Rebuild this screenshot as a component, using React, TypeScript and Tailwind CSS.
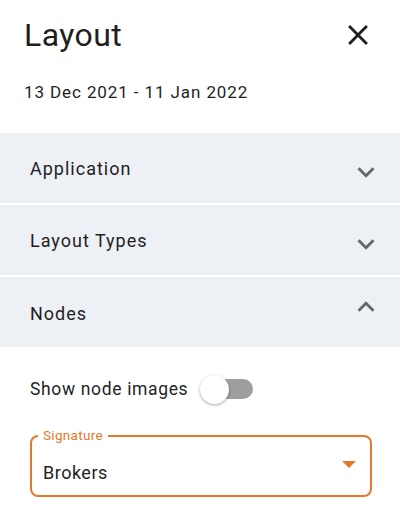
import React from "react";

export default function App() {
  const rows = [
    { label: "Application", open: false },
    { label: "Layout Types", open: false },
    { label: "Nodes", open: true },
  ];
  return (
    <div
      className="w-[400px] h-[521px] bg-white text-[#1f1f1f] overflow-hidden"
      style={{ fontFamily: "Roboto, 'Liberation Sans', sans-serif" }}
    >
      <div className="flex items-center justify-between pl-[24px] pr-[25px] pt-[14px] h-[56px]">
        <div className="text-[32px] leading-none tracking-[0.4px]">Layout</div>
        <svg width="34" height="34" viewBox="0 0 24 24" className="text-[#1f1f1f]">
          <path
            fill="currentColor"
            d="M19 6.41 17.59 5 12 10.59 6.41 5 5 6.41 10.59 12 5 17.59 6.41 19 12 13.41 17.59 19 19 17.59 13.41 12z"
          />
        </svg>
      </div>
      <div className="pl-[24px] pt-[28px] text-[17px] leading-none tracking-[0.9px]">
        13 Dec 2021 - 11 Jan 2022
      </div>
      <div className="mt-[32px] flex flex-col gap-[2px]">
        {rows.map((r) => (
          <div
            key={r.label}
            className="h-[70px] bg-[#edf0f5] flex items-center justify-between pl-[30px] pr-[17px]"
          >
            <span className={"text-[18px] tracking-[1px] " + (r.open ? "mt-[2px]" : "mt-0")}>
              {r.label}
            </span>
            <svg
              width="34"
              height="34"
              viewBox="0 0 24 24"
              className={"text-[#666] " + (r.open ? "-mt-[10px]" : "mt-[8px]")}
            >
              <path
                fill="currentColor"
                d={
                  r.open
                    ? "M7.41 15.41 12 10.83l4.59 4.58L18 14l-6-6-6 6z"
                    : "M7.41 8.59 12 13.17l4.59-4.58L18 10l-6 6-6-6 1.41-1.41z"
                }
              />
            </svg>
          </div>
        ))}
      </div>
      <div className="pl-[30px] pr-[28px] pt-[27px]">
        <div className="flex items-center h-[30px]">
          <span className="text-[17.5px] tracking-[0.65px]">Show node images</span>
          <div className="relative ml-[12px] w-[53px] h-[30px] flex items-center">
            <div className="absolute left-[15px] w-[38px] h-[20px] rounded-full bg-[#9e9e9e]" />
            <div className="absolute left-0 w-[29px] h-[29px] rounded-full bg-white shadow-[0_1px_3px_rgba(0,0,0,0.35)]" />
          </div>
        </div>
        <div className="relative mt-[31px] h-[62px] border-2 border-[#e5792b] rounded-[8px] flex items-center justify-between pl-[11px] pr-[14px]">
          <div className="absolute -top-[10px] left-[6px] px-[5px] bg-white text-[13.5px] leading-[16px] tracking-[0.3px] text-[#e5792b]">
            Signature
          </div>
          <span className="text-[18px] tracking-[0.5px] mt-[12px]">Brokers</span>
          <svg width="14" height="8" viewBox="0 0 14 8" className="-mt-[2px]">
            <path d="M0 0h14L7 7z" fill="#e5792b" />
          </svg>
        </div>
      </div>
    </div>
  );
}
